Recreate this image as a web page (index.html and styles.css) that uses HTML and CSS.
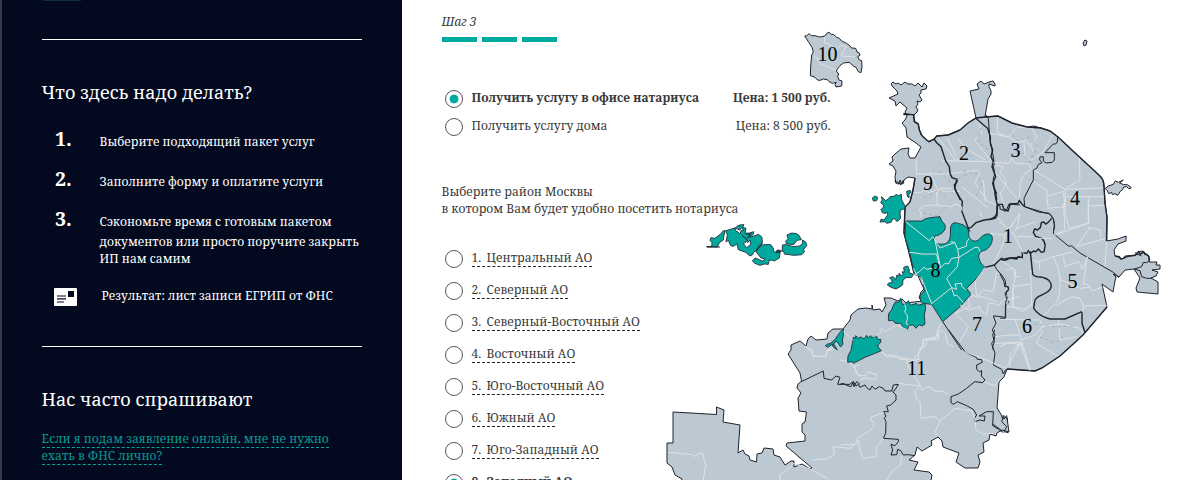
FILE: index.html
```html
<!DOCTYPE html>
<html lang="ru">
<head>
<meta charset="utf-8">
<title>Закрытие ИП</title>
<link rel="stylesheet" href="styles.css">
</head>
<body>
<div class="page">
<aside class="side">
  <div class="tab"></div>
  <section class="block">
    <h2>Что здесь надо делать?</h2>
    <ol class="steps">
      <li><b>1.</b><p class="s1">Выберите подходящий пакет услуг</p></li>
      <li><b>2.</b><p class="s2">Заполните форму и оплатите услуги</p></li>
      <li><b>3.</b><p class="s3"><span>Сэкономьте время с готовым пакетом</span><br>документов или просто поручите закрыть<br>ИП нам самим</p></li>
    </ol>
    <div class="result">
      <svg width="23" height="18" viewBox="0 0 23 18"><rect width="23" height="18" rx="1" fill="#fff"/><path d="M14 3h6v6h-6zM3 7.5h9v1H3zM3 10.2h9v1.2H3zM3 13.4h7v1.2H3z" fill="#03091e"/></svg>
      <p>Результат: лист записи ЕГРИП от ФНС</p>
    </div>
  </section>
  <section class="block faq">
    <h2>Нас часто спрашивают</h2>
    <a><span class="q1">Если я подам заявление онлайн, мне не нужно</span><span class="q2">ехать в ФНС лично?</span></a>
  </section>
</aside>
<main class="form">
  <p class="step">Шаг 3</p>
  <div class="bars"><i></i><i></i><i></i></div>
  <div class="options">
    <label class="opt chosen"><i class="radio on"></i><span class="name">Получить услугу в офисе натариуса</span><span class="price">Цена: 1 500 руб.</span></label>
    <label class="opt"><i class="radio"></i><span class="name">Получить услугу дома</span><span class="price">Цена: 8 500 руб.</span></label>
  </div>
  <p class="lead">Выберите район Москвы<br>в котором Вам будет удобно посетить нотариуса</p>
  <div class="areas">
    <label><i class="radio"></i><span class="area"><em>1.</em>Центральный АО</span></label>
    <label><i class="radio"></i><span class="area"><em>2.</em>Северный АО</span></label>
    <label><i class="radio"></i><span class="area"><em>3.</em>Северный-Восточный АО</span></label>
    <label><i class="radio"></i><span class="area"><em>4.</em>Восточный АО</span></label>
    <label><i class="radio"></i><span class="area"><em>5.</em>Юго-Восточный АО</span></label>
    <label><i class="radio"></i><span class="area"><em>6.</em>Южный АО</span></label>
    <label><i class="radio"></i><span class="area"><em>7.</em>Юго-Западный АО</span></label>
    <label class="picked"><i class="radio on"></i><span class="area"><em>8.</em>Западный АО</span></label>
  </div>
</main>
<svg class="map" width="539" height="480" viewBox="660 0 539 480">
  <!-- city land -->
  <path class="land" d="M891 84L893 82L896 84L898 83L901 85L905 82L908 84L912 84L915 86L918 83L922 87L924 83L927 86L926 89L921 90L921 93L919 95L922 100L920 102L917 101L918 104L916 107L918 110L917 112L914 115L914 122L918 124L921 135L927 140L929 142L934 139L937 136L948 135L960 130L968 123L976 118L970 91L979 89L977 84L981 81L984 84L989 82L993 81L995 84L995 86L989 84L989 87L991 91L991 94L988 99L985 117L998 116L1012 123L1027 127L1034 126L1041 128L1050 131L1058 137L1078 156L1100 176Q1104 180 1104 186L1105 203L1107 217L1106.7 241L1118 239L1126 236L1126 241L1118 244L1114 250L1115 256L1123 259L1125 256L1136 255L1138 252L1142 251L1145 253L1149 256L1149 262L1157 262L1156 265L1160 265L1160 269L1152 270L1158 272L1156 276L1151 278L1158 282L1158 294L1137 292L1136 288L1140 278L1134 269L1125 270L1119 277L1113 274L1116 277L1115 281L1113 292L1102 284L1107 307L1083 335L1080 338L1060 356L1042 368L1035 371L1007 369L1004 377L999 382L997 408L1002 416L1007 418L1009 432L1002 430L997 433L996 436L990 434L989 440L983 443L984 452L978 455L980 462L978 468L965 468L956 462L959 453L943 447L942 441L938 437L931 441L932 445L922 451L917 447L915 455L909 460L918 462L914 470L929 472L932 475L931 480L936 484L681 484L682 479L675 475L672 467L667 463L667 443L673 443L673 412L716.5 414.5L716.5 407L724 410L723 422L740 425L738 453L743 450L745 454L749 456L750 460L756.5 462L757 454L762 453L764 448L773 449L774 455L780 457L785 465L791 461L794 461L794 467L802 464L810 469L812 468L786 446L787 443L805 441L805 435L802 432L802 424L805 422L806.5 412L799 411L798 398L801 393L797 388L798 384L801.5 381L800 373L788 354L791 350L791 345L800 341L806 346L808 339L811 336L816 340L827 339L828 333L833 329L843 329L850 320L851 315L858 309L866 308L872 309L872 305L873 310L880 309L882 312L886 305L884 298L891 298L898 301L902 299L906 303L914 302L923 301L919 298L921 292L924 289L918 276L914 273L909 252L904 233L905 207L910 202L913 190L915 178L908 177L904 180L902 183L898 184L896 183L895 177L896 171L893 166L889 164L893 161L892 157L895 154L901 149L909 148L908 154L910 158L915 158L921 147L916 143L907 137L906 128L902 123L905 120L907 116L905 112L907 108L900 102L896 106L895 101L889 98L898 94L897 91L893 87Z"/>
  <g class="cell" transform="translate(800 20) scale(.33333)">
    <path class="land" d="M14 48L20 47 28 41 34 47 45 47 55 50 62 51 75 48 80 40 87 37 95 44 100 43 110 52 118 55 125 63 140 70 150 78 155 84 167 85 171 96 178 99 180 106 173 110 178 120 185 122 186 140 183 158 175 155 168 142 160 138 148 127 130 129 118 139 109 153 116 162 113 170 117 180 126 183 125 198 108 201 105 193 109 187 97 190 86 184 82 179 70 177 60 181 52 180 45 172 31 167 32 140 35 105 40 96 36 82 27 68Z"/>
    <path class="thin" d="M75 50L73 67 95 77 110 91 123 76 138 80 123 108 167 111M45 107L62 132 108 150M414 354L470 424M475 355L495 385 557 420M426 422L570 425M348 418L350 462 440 462 540 450M535 300L545 340 524 360 575 425M540 455L525 490 560 538M443 355L476 424M388 455L415 512 480 515"/>
    <path class="line" d="M310 280L340 284"/>
    <path class="line bold" d="M310 284L340 284 344 305 355 312 358 330 366 347 380 360 387 365 403 357 410 348 445 345 480 330M402 357L410 368 423 380 437 423 448 440 450 460 456 473 471 478 471 485 463 495 465 507 481 540"/>
    <path class="line bold" d="M528 295L541 307 563 325 571 350 571 370 578 390 573 410 580 425 576 440 587 470 578 490 587 520 590 540"/>
  </g>
  <g class="cell" transform="translate(990 70) scale(.33333)">
    <path class="line" d="M-13 134L-5 145 0 210 8 250 13 280 10 290 15 310 10 325 10 345 20 370 16 375 22 403"/>
    <path class="line bold" d="M22 403Q24 435 12 442L-3 450M22 403L37 403 41 417 54 423 61 402 84 400 88 392 96 402 104 410"/>
    <path class="line" d="M104 410L102 385 122 345 130 330 130 300 140 295 145 283 156 278 149 270 150 261 160 260 160 273 168 279 187 277 193 270 193 248 165 248 190 222 197 222 202 216 203 200M104 410L145 426 178 430 190 445 194 470 191 480"/>
    <path class="thin" d="M22 142L22 187 54 202 82 172 126 174 140 202 121 226 101 207 105 255 126 272 130 265 157 248 188 195M11 278L60 280 65 265 76 280 117 282 124 297 101 315 91 340 88 385M15 305L80 387M20 285L40 290 30 305 45 325 48 345 30 370 40 395M0 190L60 202 75 216 100 214M120 225L135 252M132 300L225 358 352 353M268 265L270 330 227 355 225 430 237 472M133 335L170 362 173 408 180 402M175 378L220 364 225 410 170 415M230 380L345 380M345 406L294 408 295 460 235 475M295 408L298 380"/>
    <path class="land" d="M346 355L355 348 370 343 376 333 385 337 400 330 389 339 401 344 412 344 423 352 423 355 415 355 410 350 401 351 397 360 391 364 383 376 375 371 367 374 365 367 356 371 352 362Z"/>
  </g>
  <g class="cell" transform="translate(1000 200) scale(.33333)">
    <path class="line" d="M74 20L133 38 150 42Q165 60 163 75L160 100 175 113 205 138 215 138 240 159 340 217 357 232"/>
    <path class="line bold" d="M155 55L145 67 137 72 131 66 124 68 121 83 112 90 104 87 100 97 107 109 125 115Q137 127 135 140L132 155 124 157 115 147 107 155 100 153 91 161 85 152 80 160 67 157 67 173 55 170 50 177 30 174 18 180 0 180M91 154L98 223Q104 231 122 231C148 235 156 250 153 262C148 285 103 285 104 305L101 325Q115 345 140 354L150 357 195 357 246 335 246 370 255 397"/>
    <path class="line" d="M0 222L12 245 14 260 25 260 25 272 18 278 25 308 16 320 16 355 0 355"/>
    <path class="thin" d="M190 10L195 90 163 104M265 0L266 70 165 105M270 82L230 140 318 115M265 82L300 90 303 112M320 125L315 200M105 115L155 115M105 189L150 173 220 155M102 180L118 185 119 210M160 172Q180 210 180 240Q182 280 170 307L130 348M190 170L195 200 235 185 248 208 262 170 250 250 265 255 275 273 307 262M170 315L215 290 240 295 250 318 320 316M180 238L205 250 240 265 268 262M253 317L246 337M0 180L48 212 40 260 40 320 68 335 95 315 92 210M40 260L92 252M20 285L22 320 78 327 92 312M0 358L120 360 128 380 105 405 65 420 45 357M0 440L25 428 65 435 65 425 92 510M65 425L20 500M122 380L185 372 240 385 252 405M128 390L110 430 175 470M175 360L180 420 230 410M0 65L38 100 50 85 110 65M50 85L60 42M40 100L70 160M50 110L100 110"/>
    <path class="line bold" d="M345 168L358 170 362 177 370 175 380 170 405 166 415 155 422 162 431 155 434 162 445 167 449 182"/>
    <path class="line" d="M449 182L440 188 430 187 425 200 403 207 420 212 425 230 440 235 455 235M405 158L425 168M412 165L430 158"/>
  </g>
  <!-- ring road -->
  <path class="line bold" d="M960 130L968 123L976 118L985 117L998 116L1012 123L1027 127L1041 128L1050 131L1058 137L1100 176Q1104 180 1104 186L1105 203L1107 217L1106.5 241M1107 307L1083 335L1060 356L1042 368L1035 371L1007 369M915 178L913 190L910 202L905 207L904 233L909 252L914 273"/>
  <!-- south-western border lines -->
  <g class="cell" transform="translate(840 330) scale(.33333)">
    <path class="line" d="M326 0L375 65 410 83 412 88 424 88 427 97 410 105 410 118 418 125 425 122 424 138 435 150 428 158 404 155 380 175 355 192 333 200 333 218 340 223 352 215 380 227 400 238 410 255 403 265 405 275 420 270 433 273 435 258 417 258 440 245 460 245 458 287 475 297 490 308M464 0L458 15 463 35 458 50 465 70 460 105 485 118 490 132 498 118M492 255L485 275 500 290 492 305 505 308M483 260L492 267 500 257 503 275M458 282L480 298 487 305M0 163L10 160 20 166 33 170 40 155 48 168 55 163 60 172 75 165 80 173 90 180 96 168 105 178 118 170 130 175 135 183 155 183 160 165 175 163 165 180 158 185 168 195 168 210 152 225 140 228 145 245 130 245 138 258 133 265 138 275 137 310 130 325 175 328 175 335 165 347 153 343 158 360 153 375 170 374 173 358 182 362 190 375 205 374 225 377"/>
    <path class="thin" d="M122 65L143 80 160 75 180 88 198 88 208 115 240 165 245 182 255 173 270 170 280 182 310 185 325 195M175 160L240 168 225 185 230 205 240 215 242 240 240 265 285 260 300 273 345 235 395 243 405 270 408 300 430 312 460 310M300 273L285 308 297 320M300 0L285 25 250 28 250 45 235 65 237 88 205 95M300 0L315 10 322 40 340 50M0 90L30 98 45 115 55 135 75 138 85 125 110 135 105 150 75 143 60 150M132 248L95 260 92 270 105 280 92 300 53 325 47 343 0 345M53 330L67 385 108 380 110 350 130 325M185 377L182 405 155 425 140 450M375 65L500 115M465 40L540 37 570 122M540 37L510 75 510 115M433 155L465 168 480 145"/>
  </g>
  <g class="cell" transform="translate(660 330) scale(.33333)">
    <path class="line" d="M424 155L490 123 492 145 515 150 528 138 540 142 533 163 570 163 578 155 582 170 590 155 600 163"/>
    <path class="thin" d="M25 367L98 374 100 380 120 370 130 372 130 383 137 403 133 430 130 450M360 450L358 435 390 412 400 400 450 417 505 447M455 390L500 387 523 373 520 350 570 355 600 330M435 48L455 60 460 78 498 80 500 65 520 55M600 105L583 108 590 130 600 140"/>
  </g>
  <!-- western district and its exclaves -->
  <g class="cell" transform="translate(860 180) scale(.33333)">
    <path class="teal" d="M137 123L185 123Q195 115 210 113L240 110 245 123Q258 133 256 143C254 158 235 168 225 167L220 180 230 190C255 198 270 188 271 165L272 140Q276 128 285 128Q315 133 322 145L325 150 327 170C335 188 352 186 360 175C375 158 395 158 397 173C398 195 382 210 370 212Q355 216 356 232Q358 250 375 262L350 295 320 325 333 343 300 380 248 425 215 373 190 370 182 365 180 348 192 333 192 325 190 305 180 290 163 283 160 265 148 215 135 170Z"/>
    <path class="thin" d="M137 125L208 182 218 170 240 204 285 187M148 217Q190 225 230 222L240 265 255 250 265 252 275 235 297 232 345 202 355 202 360 215M225 180L241 260 230 268 215 265 200 268 192 262 178 275 163 284M272 185L284 187 293 208 297 232 292 260 260 295 275 323 215 371M293 208L320 198 320 185 328 175M275 323L290 328 285 312 305 310 305 318 317 330M275 325L283 348 290 345 310 367M183 290L215 371M160 265L173 290"/>
    <path class="line bold" d="M290 0L285 20Q283 30 307 65L305 92 325 145 332 143 348 128 373 120 395 117Q412 115 411 105L411 75"/>
    <path class="line" d="M400 0L405 45 411 75 420 78 420 87 438 94 447 72 480 75M325 145L330 155M403 255L410 268 425 285 435 300 438 318 447 325 435 340 440 355 437 370 437 412 405 408 400 408 408 430 397 450 405 465 402 480 395 490 400 510M248 425L305 510"/>
    <path class="line bold" d="M375 262L403 255 413 245 425 235 432 238 440 235 480 232"/>
    <path class="thin" d="M165 38L180 38 195 30 205 38 230 30 230 40 233 75 190 77 178 90 185 105 178 115M230 40L240 25 275 25M233 75L275 80 285 72 305 80 305 92M305 20L385 85M370 0L375 60 410 75M360 95L365 110M410 110L445 150 480 100M390 160L435 165 460 130M435 165L428 195 400 250M375 262L345 305 350 345 410 365M345 345L325 355 330 380 285 400 325 440 300 485M355 345L370 330 400 335 410 275M333 343L360 355M300 375L325 390 360 380 360 390 380 405 385 370 400 370 415 378 435 355M243 430L230 455 233 470 190 480 185 510M440 270L460 265 465 290 480 290M480 350L440 360M460 320L455 380M405 470L450 465 480 465"/>
    <path class="teal" d="M37 54L44 48 53 52 50 62 40 63ZM64 50L77 62 85 57 90 50 105 48 108 43 115 47 124 43 125 60 135 78 135 86 128 88 121 91 120 100 122 115 111 125 104 116 98 117 93 127 80 130 75 125 60 126 63 118 72 120 83 105 83 97 75 100 67 98 65 91 62 89 68 85 72 77 62 68 67 60ZM140 34L150 31 153 36 147 42 147 54 142 48Z"/>
    <path class="line" d="M105 0L107 8 113 5 117 12 120 0 125 10 131 0 131 10 120 14"/>
    <path class="teal" d="M82 315L86 309 97 308 95 300 89 293 100 290 107 299 111 285 117 288 117 280 125 287 129 283 127 275 133 277 131 262 143 258 148 270 147 278 160 283 155 292 138 293 129 300 128 314 119 321 108 327 93 322Z"/>
    <path class="teal" d="M86 400L95 390 100 376 107 365 116 368 122 355 127 373 136 373 145 362 150 374 155 375 170 370 174 376 195 370 197 385 193 405 195 432 187 438 177 434 168 445 160 435 146 436 142 450 130 442 122 430 106 430 98 421 85 422Z"/>
    <path class="thin" d="M134 373L138 385 134 397 142 405 142 418 138 430 146 436"/>
  </g>
  <g class="cell" transform="translate(700 210) scale(.33333)">
    <path class="teal" d="M20 110L35 110 36 98 30 91 33 83 45 85 61 73 70 62 76 62 72 75 70 90 58 98 52 111Z"/>
    <path class="teal" d="M78 62L108 53 114 46 118 50 118 45 132 44 128 52 138 55 135 70 149 69 161 65 160 73 150 82 165 77 176 73 186 82 187 99 178 105 172 122 162 125 158 134 150 138 137 127 115 119 111 102 100 109 92 107 85 91 78 96 82 75Z"/>
    <path class="teal" d="M168 125L172 112 190 104 212 104 220 115 220 123 228 127 232 120 241 121 238 144 223 153 215 150 207 152 205 163 193 162 180 166 165 160 157 153 165 144 178 149 189 154 195 146 183 144Z"/>
    <path class="teal" d="M257 94L264 86 261 75 275 69 290 71 297 76 304 89 291 91 281 104 259 101ZM247 105L261 104 279 110 300 108 307 100 308 90 318 97 320 107 311 118 313 126 305 134 282 136 253 132 252 125 247 123Z"/>
    <path fill="#fff" stroke="#273e4b" stroke-width="1" d="M104 54L108 64 114 66 120 72 123 62 131 62 125 52 120 60 112 57ZM130 101L140 94 143 98 150 90 152 103 140 113Z"/>
    <path class="line" d="M20 111L60 111M138 71L145 75 155 70M140 85L151 78 145 70M125 75L137 85 143 93M230 123L248 123M170 122L187 100M228 128L240 126"/>
    <path class="teal" d="M376 407L383 402 390 401 404 390 420 367 430 357 430 378 427 390 429 402 422 411 417 404 411 394 405 396 401 402 412 420 398 409 398 402 383 412Z"/>
    <path class="teal" d="M459 390L459 383 467 384 467 377 476 385 483 380 488 385 493 386 500 376 505 384 512 377 515 384 524 377 529 377 533 388 543 389 541 399 533 405 536 413 544 422 520 432 497 441 460 460 457 455 443 457 444 438 453 421Z"/>
    <path class="thin" d="M430 365L460 390M320 413L335 420 338 438 378 440 382 420 398 413M520 380L540 370 545 355 555 365 590 345 623 360M545 425L560 440 570 432 575 443 590 435 600 443 630 448 640 450 660 425 660 415 675 410 680 390 715 388 717 360"/>
  </g>
  <path class="land" d="M1083 43L1085 40L1087 41L1086 45L1084 46Z"/>
  <!-- road dashes in the northern districts -->
  <path class="roads" d="M940 171L950 182L968 174M955 158L966 151L974 160M981 128L978 142L990 151M1009 130L1018 141L1028 137L1037 145L1031 162L1020 150M1036 151L1026 166M963 171L977 174L982 184L975 199M924 198L939 190L947 199M923 213L937 216L948 205M1034 324L1055 327L1076 326M1040 337L1056 343L1070 330"/>
  <g class="nums">
    <text x="817.5" y="61">10</text><text x="959" y="160">2</text><text x="1010.500" y="157">3</text><text x="923" y="190">9</text><text x="1070" y="205">4</text><text x="1003" y="243">1</text><text x="930.500" y="277">8</text><text x="1067.500" y="288">5</text><text x="972" y="331">7</text><text x="1022" y="333">6</text><text x="907" y="375">11</text>
  </g>
</svg>
</div>
</body>
</html>
```
FILE: styles.css
```css
* { box-sizing: border-box; margin: 0; padding: 0; }
html, body { height: 480px; overflow: hidden; }
body { background: #fff; font: 12px/17px "Noto Serif", "Droid Serif", "DejaVu Serif Condensed", "DejaVu Serif", serif; color: #3a3a3a; }
.page { position: relative; display: flex; height: 480px; overflow: hidden; }
p, span, h2 { white-space: nowrap; }

.side { width: 402px; height: 480px; flex: none; background: #03091e; border-left: 2px solid #333748; padding-left: 40px; color: #fff; }
.tab { width: 38px; height: 1px; margin: 0 0 38px 1px; background: #053339; }
.block { width: 320px; height: 307px; border-top: 1px solid #fff; padding-top: 40px; }
h2 { font-size: 18px; line-height: 24px; font-weight: 400; margin-left: -.4px; letter-spacing: .07px; }
.steps { list-style: none; padding: 25px 0 0 13px; }
.steps li { display: flex; min-height: 40px; line-height: 17px; }
.steps b { width: 44.500px; font-size: 19.500px; line-height: 20px; letter-spacing: .1px; }
.steps p { padding-top: 4px; letter-spacing: .03px; }
.steps .s3 span { display: inline-block; height: 20px; }
.result { display: flex; padding: 20px 0 0 12px; }
.result svg { margin-top: 1px; }
.result p { padding-left: 24.500px; line-height: 17px; letter-spacing: .03px; }
.faq a { display: flex; flex-direction: column; align-items: flex-start; margin-top: 20px; line-height: 17px; color: #079a91; }
.faq span { height: 17px; line-height: 16px; margin-left: -.4px; border-bottom: 1px dashed #00a99d; letter-spacing: .04px; }

.form { width: 430px; padding: 13px 0 0 39.600px; }
.step { font-style: italic; line-height: 17px; }
.bars { display: flex; gap: 5px; margin: 7px 0 0 .4px; }
.bars i { width: 35px; height: 5px; background: #00a99d; }
.options { padding-top: 47px; width: 389px; }
.opt { display: flex; height: 28px; padding-left: 3.400px; }
.radio { flex: none; width: 18px; height: 18px; margin-right: 8.600px; border: 1px solid #555; border-radius: 50%; background: #fff; }
.opt .radio { margin-top: 1px; }
.radio.on { background: radial-gradient(circle, #00a99d 4px, #fff 4.8px); }
.price { margin-left: auto; }
.chosen { font-weight: 700; }
.chosen .name { letter-spacing: .04px; }
.lead { margin-top: 38px; }
.areas { padding: 33px 0 0 3.400px; }
.areas label { display: flex; height: 32px; }
.area { height: 17px; line-height: 16px; border-bottom: 1px dashed #222; letter-spacing: .06px; }
.area em { display: inline-block; width: 15px; font-style: normal; }
.picked { font-weight: 700; }

.map { position: absolute; left: 660px; top: 0; pointer-events: none; }
.land { fill: #bcc9d2; stroke: #20222e; stroke-width: 1; }
.teal { fill: #00a99d; stroke: #273e4b; stroke-width: 1; }
.line { fill: none; stroke: #20222e; stroke-width: 1; }
.bold { stroke-width: 1.4; }
.thin { fill: none; stroke: #e0e2e3; stroke-width: 1; }
.cell path { vector-effect: non-scaling-stroke; }
.roads { fill: none; stroke: #a2a7aa; stroke-width: .8; stroke-dasharray: 3 3; }
.nums text { font: 20px "Liberation Serif", serif; fill: #000; }
```
